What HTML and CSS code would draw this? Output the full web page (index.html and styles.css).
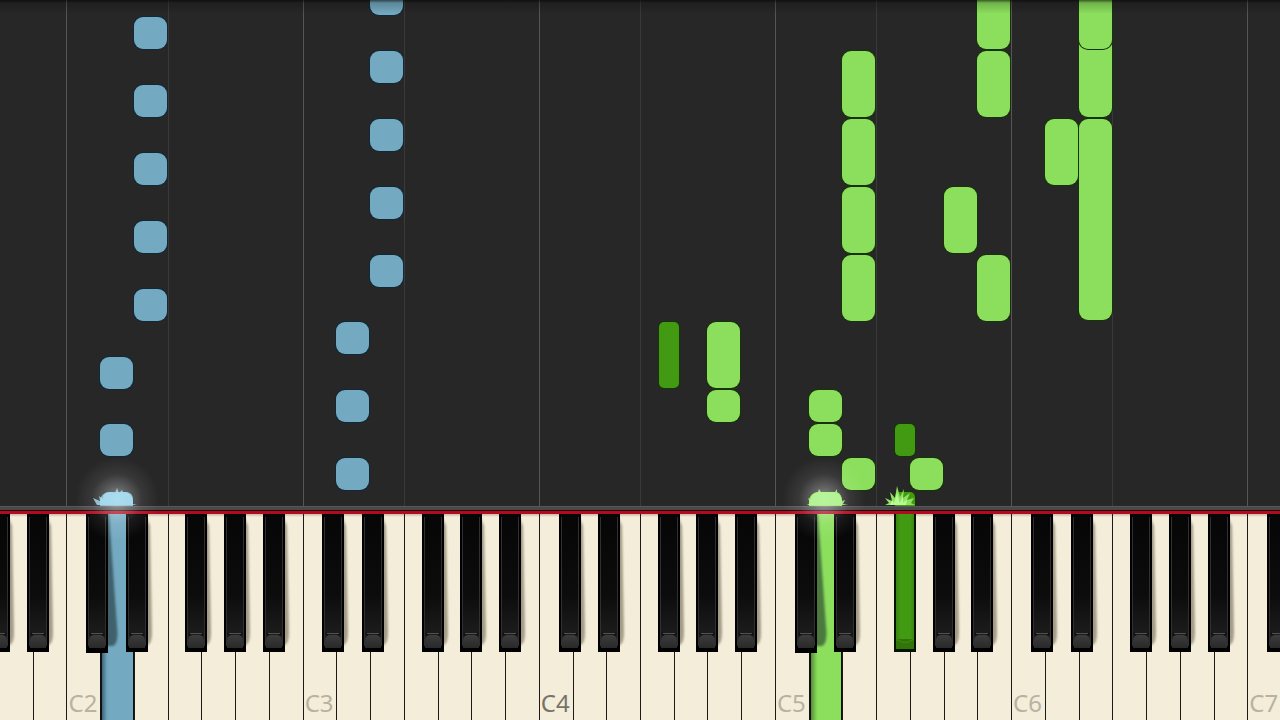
FILE: index.html
```html
<!DOCTYPE html>
<html lang="en">
<head>
<meta charset="utf-8">
<meta name="viewport" content="width=device-width, initial-scale=1">
<title>Piano roll</title>
<link rel="stylesheet" href="styles.css">
</head>
<body>
<svg class="defs" aria-hidden="true">
  <defs>
    <linearGradient id="face" x1="0" y1="0" x2="0" y2="1">
      <stop offset="0" stop-color="#060606"/><stop offset=".6" stop-color="#0c0c0c"/><stop offset="1" stop-color="#222"/>
    </linearGradient>
    <linearGradient id="tip" x1="0" y1="0" x2="0" y2="1">
      <stop offset="0" stop-color="#3c3c3c"/><stop offset="1" stop-color="#292929"/>
    </linearGradient>
    <linearGradient id="green-face" x1="0" y1="0" x2="1" y2="0">
      <stop offset="0" stop-color="#398611"/><stop offset=".25" stop-color="#429912"/><stop offset=".8" stop-color="#429912"/><stop offset="1" stop-color="#398611"/>
    </linearGradient>
    <filter id="soft" x="-50%" y="-10%" width="200%" height="120%"><feGaussianBlur stdDeviation="1"/></filter>
    <radialGradient id="halo">
      <stop offset="0" stop-color="#fff" stop-opacity=".48"/><stop offset=".3" stop-color="#fff" stop-opacity=".26"/><stop offset=".6" stop-color="#fff" stop-opacity=".08"/><stop offset="1" stop-color="#fff" stop-opacity="0"/>
    </radialGradient>
    <g id="key-body">
      <path d="M0 0H22V138H0Z" fill="#000"/>
      <path d="M2 1H20V120L18 134H4L2 120Z" fill="url(#face)"/>
      <path d="M2.5 3V132M19.5 3V132" stroke="#303030"/>
      <path d="M4 119L6 122H16L18 119" fill="none" stroke="#111" stroke-width="2"/>
      <path d="M5 119.500H17" stroke="#505050"/>
      <path d="M3 134V126Q4 121 8 121H14Q18 121 19 126V134Z" fill="url(#tip)"/>
    </g>
    <symbol id="key" viewBox="0 0 36 140">
      <path d="M20 2L24 12L26 118Q26 129 22 131H20Z" fill="#554b35" opacity=".5" filter="url(#soft)"/>
      <use href="#key-body"/>
    </symbol>
    <symbol id="key-deep" viewBox="0 0 36 140">
      <path d="M20 0H23L31 112Q33 129 27 132H20Z" fill="#182628" opacity=".55" filter="url(#soft)"/>
      <path d="M0 130H22V139H0Z"/>
      <use href="#key-body"/>
    </symbol>
    <symbol id="key-down" viewBox="0 0 36 140">
      <path d="M0 0H22V138H0Z" fill="#061303"/>
      <path d="M2 0H20V135H2Z" fill="url(#green-face)"/>
      <path d="M2 135V128L4 125H18L20 128V135Z" fill="#317508"/>
      <path d="M4 126Q11 131 18 126" fill="none" stroke="#418f17"/>
    </symbol>
  </defs>
</svg>

<main class="stage">
  <section class="roll" aria-label="Falling notes">
    <div class="lanes">
      <span></span><span class="c"></span><span class="f"></span><span class="c"></span><span class="f"></span><span class="c"></span><span class="f"></span><span class="c"></span><span class="f"></span><span class="c"></span><span class="f"></span><span class="c"></span>
    </div>

    <i class="note blue" style="--key:4;--top:17px"></i>
    <i class="note blue" style="--key:4;--top:85px"></i>
    <i class="note blue" style="--key:4;--top:153px"></i>
    <i class="note blue" style="--key:4;--top:221px"></i>
    <i class="note blue" style="--key:4;--top:289px"></i>
    <i class="note blue" style="--key:3;--top:357px"></i>
    <i class="note blue" style="--key:3;--top:424px"></i>
    <i class="note blue" style="--key:3;--top:492px"></i>
    <i class="note blue" style="--key:11;--top:-17px"></i>
    <i class="note blue" style="--key:11;--top:51px"></i>
    <i class="note blue" style="--key:11;--top:119px"></i>
    <i class="note blue" style="--key:11;--top:187px"></i>
    <i class="note blue" style="--key:11;--top:255px"></i>
    <i class="note blue" style="--key:10;--top:322px"></i>
    <i class="note blue" style="--key:10;--top:390px"></i>
    <i class="note blue" style="--key:10;--top:458px"></i>

    <i class="note sharp long" style="--key:19;--top:322px"></i>
    <i class="note long" style="--key:21;--top:322px"></i>
    <i class="note" style="--key:21;--top:390px"></i>
    <i class="note" style="--key:24;--top:390px"></i>
    <i class="note" style="--key:24;--top:424px"></i>
    <i class="note" style="--key:24;--top:492px"></i>
    <i class="note long" style="--key:25;--top:51px"></i>
    <i class="note long" style="--key:25;--top:119px"></i>
    <i class="note long" style="--key:25;--top:187px"></i>
    <i class="note long" style="--key:25;--top:255px"></i>
    <i class="note" style="--key:25;--top:458px"></i>
    <i class="note sharp" style="--key:26;--top:424px"></i>
    <i class="note sharp" style="--key:26;--top:492px"></i>
    <i class="note" style="--key:27;--top:458px"></i>
    <i class="note long" style="--key:28;--top:187px"></i>
    <i class="note long" style="--key:29;--top:-17px"></i>
    <i class="note long" style="--key:29;--top:51px"></i>
    <i class="note long" style="--key:29;--top:255px"></i>
    <i class="note long" style="--key:31;--top:119px"></i>
    <i class="note held" style="--key:32;--top:-84px"></i>
    <i class="note long" style="--key:32;--top:-17px"></i>
    <i class="note held" style="--key:32;--top:119px"></i>
  </section>

  <div class="rail"></div>

  <section class="keyboard" aria-label="Piano keyboard">
    <div class="slot"><button class="white" aria-label="A1"></button><button class="black before" aria-label="G sharp 1"><svg><use href="#key"/></svg></button><button class="black a" aria-label="A sharp 1"><svg><use href="#key"/></svg></button></div>
    <div class="slot"><button class="white" aria-label="B1"></button></div>

    <div class="slot"><button class="white">C2</button><button class="black c" aria-label="C sharp 2"><svg><use href="#key-deep"/></svg></button></div>
    <div class="slot"><button class="white down blue" aria-label="D2"></button><button class="black d" aria-label="D sharp 2"><svg><use href="#key"/></svg></button></div>
    <div class="slot"><button class="white" aria-label="E2"></button></div>
    <div class="slot"><button class="white" aria-label="F2"></button><button class="black f" aria-label="F sharp 2"><svg><use href="#key"/></svg></button></div>
    <div class="slot"><button class="white" aria-label="G2"></button><button class="black g" aria-label="G sharp 2"><svg><use href="#key"/></svg></button></div>
    <div class="slot"><button class="white" aria-label="A2"></button><button class="black a" aria-label="A sharp 2"><svg><use href="#key"/></svg></button></div>
    <div class="slot"><button class="white" aria-label="B2"></button></div>

    <div class="slot"><button class="white">C3</button><button class="black c" aria-label="C sharp 3"><svg><use href="#key"/></svg></button></div>
    <div class="slot"><button class="white" aria-label="D3"></button><button class="black d" aria-label="D sharp 3"><svg><use href="#key"/></svg></button></div>
    <div class="slot"><button class="white" aria-label="E3"></button></div>
    <div class="slot"><button class="white" aria-label="F3"></button><button class="black f" aria-label="F sharp 3"><svg><use href="#key"/></svg></button></div>
    <div class="slot"><button class="white" aria-label="G3"></button><button class="black g" aria-label="G sharp 3"><svg><use href="#key"/></svg></button></div>
    <div class="slot"><button class="white" aria-label="A3"></button><button class="black a" aria-label="A sharp 3"><svg><use href="#key"/></svg></button></div>
    <div class="slot"><button class="white" aria-label="B3"></button></div>

    <div class="slot"><button class="white middle">C4</button><button class="black c" aria-label="C sharp 4"><svg><use href="#key"/></svg></button></div>
    <div class="slot"><button class="white" aria-label="D4"></button><button class="black d" aria-label="D sharp 4"><svg><use href="#key"/></svg></button></div>
    <div class="slot"><button class="white" aria-label="E4"></button></div>
    <div class="slot"><button class="white" aria-label="F4"></button><button class="black f" aria-label="F sharp 4"><svg><use href="#key"/></svg></button></div>
    <div class="slot"><button class="white" aria-label="G4"></button><button class="black g" aria-label="G sharp 4"><svg><use href="#key"/></svg></button></div>
    <div class="slot"><button class="white" aria-label="A4"></button><button class="black a" aria-label="A sharp 4"><svg><use href="#key"/></svg></button></div>
    <div class="slot"><button class="white" aria-label="B4"></button></div>

    <div class="slot"><button class="white">C5</button><button class="black c" aria-label="C sharp 5"><svg><use href="#key-deep"/></svg></button></div>
    <div class="slot"><button class="white down green" aria-label="D5"></button><button class="black d" aria-label="D sharp 5"><svg><use href="#key"/></svg></button></div>
    <div class="slot"><button class="white" aria-label="E5"></button></div>
    <div class="slot"><button class="white" aria-label="F5"></button><button class="black f" aria-label="F sharp 5"><svg><use href="#key-down"/></svg></button></div>
    <div class="slot"><button class="white" aria-label="G5"></button><button class="black g" aria-label="G sharp 5"><svg><use href="#key"/></svg></button></div>
    <div class="slot"><button class="white" aria-label="A5"></button><button class="black a" aria-label="A sharp 5"><svg><use href="#key"/></svg></button></div>
    <div class="slot"><button class="white" aria-label="B5"></button></div>

    <div class="slot"><button class="white">C6</button><button class="black c" aria-label="C sharp 6"><svg><use href="#key"/></svg></button></div>
    <div class="slot"><button class="white" aria-label="D6"></button><button class="black d" aria-label="D sharp 6"><svg><use href="#key"/></svg></button></div>
    <div class="slot"><button class="white" aria-label="E6"></button></div>
    <div class="slot"><button class="white" aria-label="F6"></button><button class="black f" aria-label="F sharp 6"><svg><use href="#key"/></svg></button></div>
    <div class="slot"><button class="white" aria-label="G6"></button><button class="black g" aria-label="G sharp 6"><svg><use href="#key"/></svg></button></div>
    <div class="slot"><button class="white" aria-label="A6"></button><button class="black a" aria-label="A sharp 6"><svg><use href="#key"/></svg></button></div>
    <div class="slot"><button class="white" aria-label="B6"></button></div>

    <div class="slot"><button class="white">C7</button><button class="black c" aria-label="C sharp 7"><svg><use href="#key"/></svg></button></div>
  </section>

  <svg class="spark" style="--key:3" viewBox="0 0 100 100" aria-hidden="true">
    <circle cx="50" cy="44" r="42" fill="url(#halo)"/>
    <path d="M30 50L26 43L33 46L32 41L36 44Q36 37 43 37L48 38L50 33L52 38L55 35L56 37H60Q66 38 66 45V49L70 50Z" fill="#a9def2" opacity=".8"/>
  </svg>
  <svg class="spark" style="--key:24" viewBox="0 0 100 100" aria-hidden="true">
    <circle cx="48" cy="44" r="42" fill="url(#halo)"/>
    <path d="M31 50L34 48L32 43L35 45Q36 38 42 37L43 34L45 37H59L61 34L61 37Q66 39 66 46L69 45L67 49L72 50Z" fill="#b6f598" opacity=".85"/>
  </svg>
  <svg class="spark" style="--key:26" viewBox="0 0 100 100" aria-hidden="true">
    <path d="M42 50L46 48L42 43L49 46L47 37L52 43L54 31L57 42L61 34L60 43L67 38L64 45L71 43L68 48L72 50Z" fill="#8fe25f"/>
    <path d="M47 50L49 45L51 48L54 38L57 48L60 41L60 48L64 44L63 50Z" fill="#baf797"/>
  </svg>
</main>
</body>
</html>
```
FILE: styles.css
```css
* {
  box-sizing: border-box;
}

body {
  margin: 0;
  background: #272727;
  font-family: "Noto Sans", "Open Sans", sans-serif;
}

.defs {
  position: absolute;
  width: 0;
  height: 0;
}

/* 38 white keys span the stage, running one pixel past each side */
.stage {
  --column: calc((100% + 2px) / 38);
  position: relative;
  display: flex;
  flex-direction: column;
  min-height: 100vh;
  overflow: hidden;
}

.roll {
  position: relative;
  display: flex;
  flex: 1;
  min-height: 506px;
  overflow: hidden;
  background: #272727;
}

.roll::after {
  content: "";
  position: absolute;
  inset: 0 0 auto;
  height: 14px;
  background: linear-gradient(rgba(0, 0, 0, .6), rgba(0, 0, 0, .2) 3px, transparent);
}

.lanes {
  display: grid;
  flex: 1;
  grid-template-columns: 2fr 3fr 4fr 3fr 4fr 3fr 4fr 3fr 4fr 3fr 4fr 1fr;
  margin: 0 -1px;
}

.lanes .c {
  border-left: 1px solid #555;
}

.lanes .f {
  border-left: 1px solid #3a3a3a;
}

.note {
  position: absolute;
  top: var(--top);
  left: calc(var(--column) * var(--key) - 1px);
  width: 33px;
  height: 32px;
  border-radius: 9px;
  background: #8cdf5d;
  box-shadow: 0 0 0 1px #173309;
}

.note.blue {
  background: #74aac1;
  box-shadow: 0 0 0 1px #102838;
}

.note.long {
  height: 66px;
}

.note.held {
  height: 201px;
}

.note.sharp {
  width: 20px;
  margin-left: 19px;
  border-radius: 5px;
  background: #429912;
}

.rail {
  height: 8px;
  background: linear-gradient(#585858 1px, #484848 1px 4px, #180609 4px 5px, #b40a20 5px);
}

.keyboard {
  display: grid;
  grid-template-columns: repeat(38, 1fr);
  height: 206px;
  margin: 0 -1px;
  background: #f3edda;
}

.slot {
  position: relative;
  display: flex;
  min-width: 0;
}

button {
  padding: 0;
  border: 0;
  background: none;
  font: inherit;
}

.white {
  display: flex;
  flex: 1;
  align-items: flex-end;
  min-width: 0;
  padding: 0 0 5px 1px;
  border-left: 1px solid #1c1a16;
  background: linear-gradient(#c9b9a9, #f3edda 3px);
  color: #b8b2a2;
  font-size: 24px;
  line-height: 24px;
}

.white.middle {
  color: #77736a;
}

.white.down {
  border-right: 1px solid #111;
  border-left: 2px solid #111;
}

.white.blue {
  background: linear-gradient(90deg, #3f6478, #6ea5bb 5px, #74aac1 7px);
}

.white.green {
  background: linear-gradient(90deg, #568b3c, #80cf54 5px, #8cdf5d 7px);
}

.black {
  position: absolute;
  z-index: 1;
  top: 0;
  width: 22px;
  height: 138px;
}

.black svg {
  display: block;
  width: 36px;
  height: 140px;
  pointer-events: none;
}

.black.before {
  left: -11px;
}

.black.c {
  left: calc(100% - 14px);
}

.black.d {
  left: calc(100% - 8px);
}

.black.f {
  left: calc(100% - 16px);
}

.black.g {
  left: calc(100% - 11px);
}

.black.a {
  left: calc(100% - 6px);
}

.spark {
  position: absolute;
  z-index: 2;
  bottom: 165px;
  left: calc(var(--column) * var(--key) - 34px);
  width: 100px;
  height: 100px;
  pointer-events: none;
}
```
